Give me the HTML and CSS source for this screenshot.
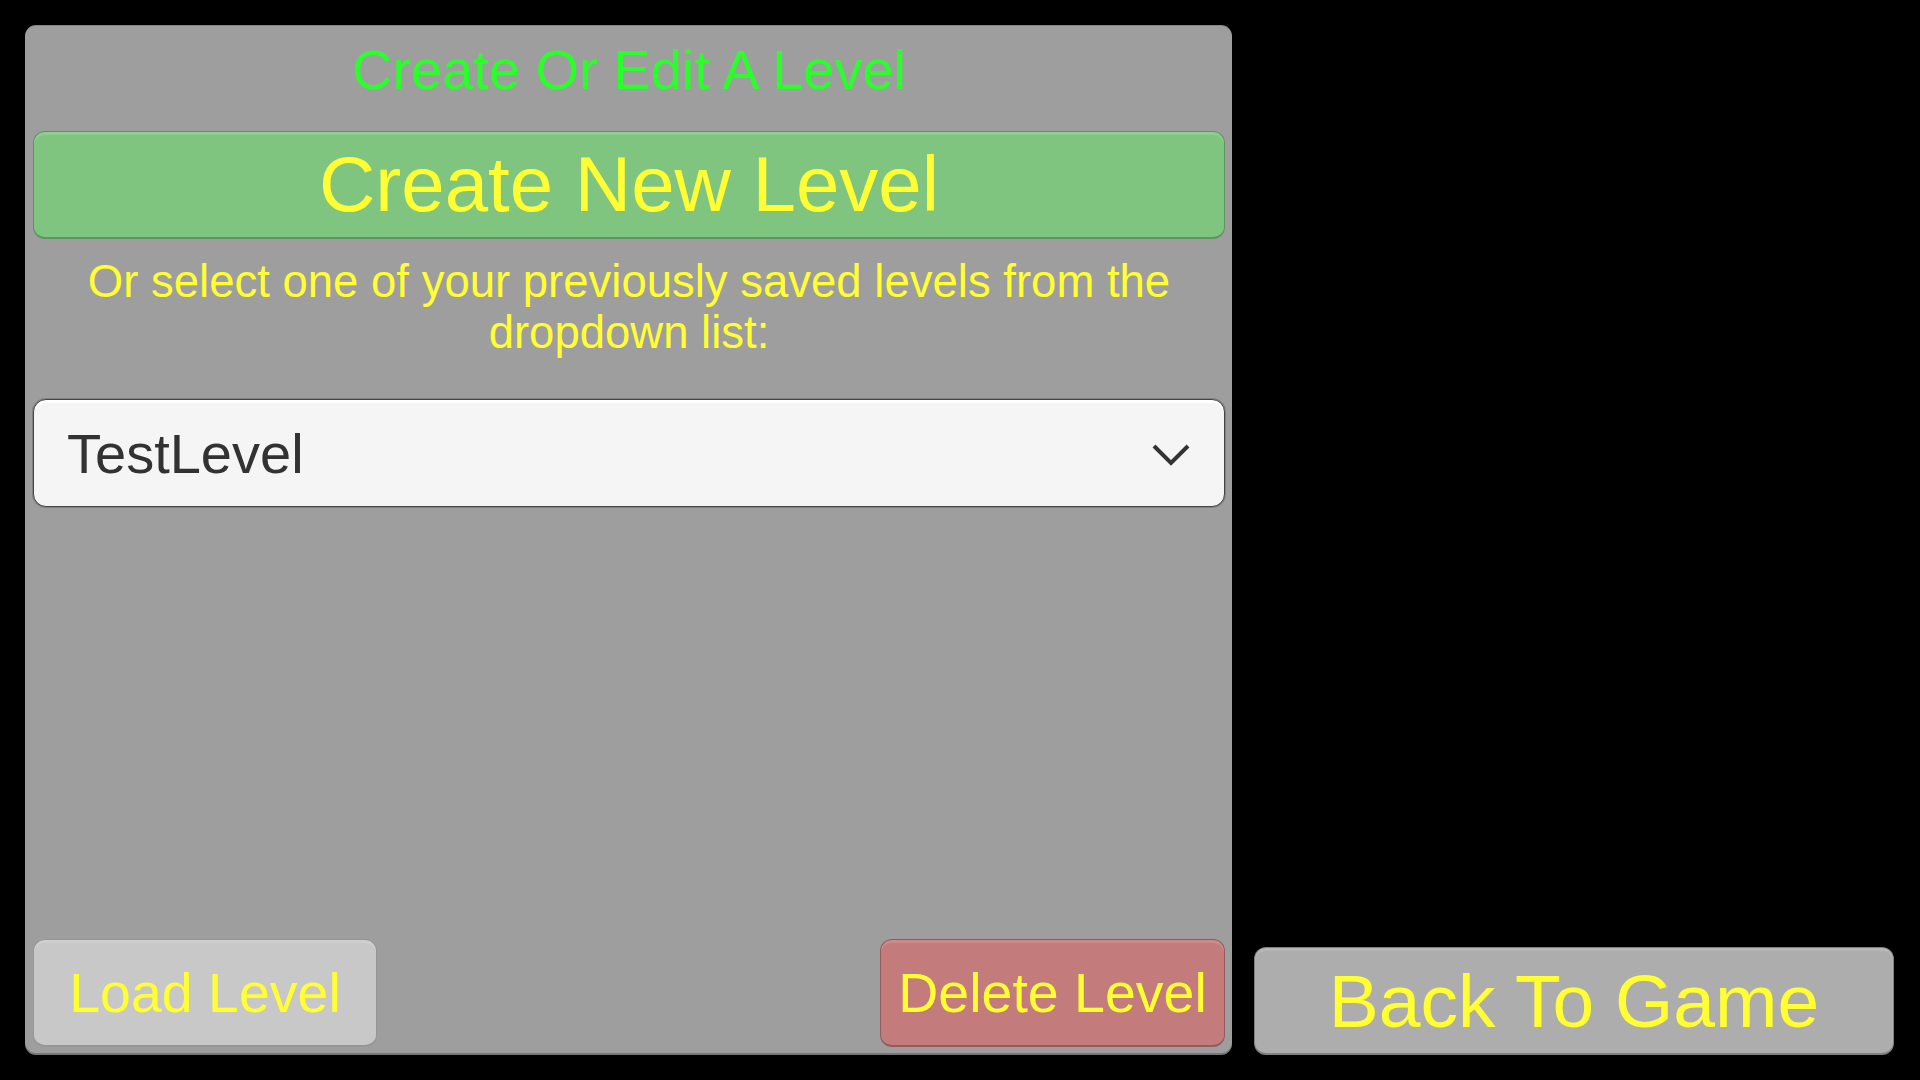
FILE: index.html
```html
<!DOCTYPE html>
<html lang="en">
<head>
<meta charset="utf-8">
<title>Create Or Edit A Level</title>
<link rel="stylesheet" href="styles.css">
</head>
<body>
<div class="screen">
  <section class="panel">
    <h1 class="title">Create Or Edit A Level</h1>
    <button class="btn btn-create">Create New Level</button>
    <p class="hint">Or select one of your previously saved levels from the dropdown list:</p>
    <div class="dropdown">
      <span class="dropdown-label">TestLevel</span>
      <svg class="chevron" viewBox="0 0 40 24" width="40" height="24" aria-hidden="true">
        <polyline points="3,3 20,20 37,3" fill="none" stroke="#333333" stroke-width="4" stroke-linejoin="miter" stroke-linecap="butt"/>
      </svg>
    </div>
    <div class="spacer"></div>
    <div class="actions">
      <button class="btn btn-small btn-load">Load Level</button>
      <button class="btn btn-small btn-delete">Delete Level</button>
    </div>
  </section>
  <aside class="side">
    <button class="btn btn-back">Back To Game</button>
  </aside>
</div>
</body>
</html>
```

FILE: styles.css
```css
* { box-sizing: border-box; }

html, body {
  margin: 0;
  padding: 0;
  background: #000000;
  width: 1920px;
  height: 1080px;
  overflow: hidden;
  font-family: "Liberation Sans", Arial, sans-serif;
}

.screen {
  display: flex;
  padding: 25px 26px 25px 25px;
  height: 1080px;
  gap: 22px;
}

.panel {
  width: 1207px;
  height: 1030px;
  background: #9e9e9e;
  border-radius: 11px;
  box-shadow: inset 0 -2px 0 rgba(0, 0, 0, 0.25), inset 0 1px 0 rgba(0, 0, 0, 0.15);
  display: flex;
  flex-direction: column;
  padding: 12px 7px 8px 8px;
}

.title {
  margin: 0;
  font-weight: normal;
  font-size: 56px;
  line-height: 66px;
  color: #2bff2b;
  text-align: center;
  margin-bottom: 28px;
}

.btn {
  font-family: "Liberation Sans", Arial, sans-serif;
  font-weight: normal;
  color: #ffff33;
  border: 1px solid rgba(0, 0, 0, 0.25);
  border-bottom-width: 2px;
  border-radius: 12px;
  box-shadow: inset 0 3px 0 rgba(255, 255, 255, 0.12);
  display: flex;
  align-items: center;
  justify-content: center;
  padding: 0;
  margin: 0;
  cursor: pointer;
}

.btn-create {
  width: 100%;
  height: 108px;
  background: #7fc580;
  font-size: 78px;
}

.hint {
  margin: 17px 10px 0;
  font-size: 45.5px;
  line-height: 51px;
  color: #ffff33;
  text-align: center;
}

.dropdown {
  margin-top: 41px;
  height: 108px;
  background: #f5f5f5;
  border: 1px solid #454545;
  border-radius: 13px;
  box-shadow: 0 0 0 1px rgba(0, 0, 0, 0.18), inset 0 3px 0 #ffffff;
  display: flex;
  align-items: center;
  justify-content: space-between;
  padding: 0 33px 0 33px;
}

.dropdown-label {
  font-size: 56px;
  color: #323232;
}

.chevron {
  display: block;
  width: 40px;
  height: 24px;
  margin-top: 4px;
}

.spacer {
  flex: 1;
}

.actions {
  display: flex;
  justify-content: space-between;
  align-items: flex-end;
}

.btn-small {
  height: 108px;
  font-size: 55.5px;
}

.btn-load {
  width: 344px;
  background: #c8c8c8;
}

.btn-delete {
  width: 345px;
  background: #c47b7b;
}

.side {
  width: 640px;
  display: flex;
  flex-direction: column;
  justify-content: flex-end;
}

.btn-back {
  width: 640px;
  height: 108px;
  background: #adadad;
  font-size: 75px;
}
```
